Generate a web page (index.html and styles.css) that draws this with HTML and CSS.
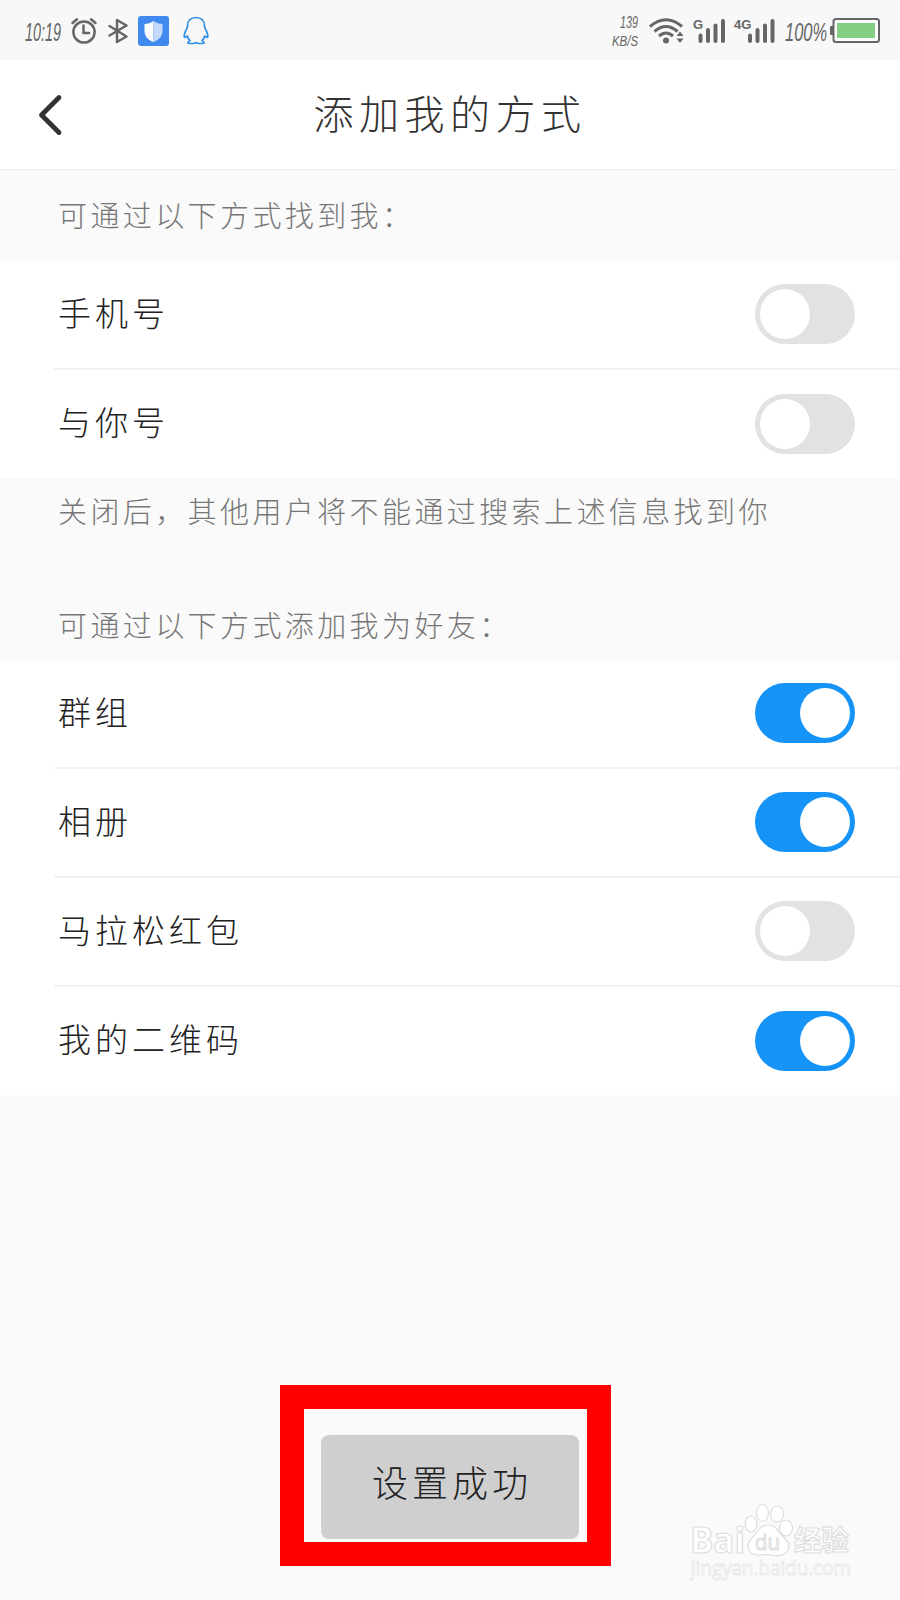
FILE: index.html
```
<!DOCTYPE html>
<html lang="zh-CN">
<head>
    <meta charset="UTF-8">
    <meta name="viewport" content="width=device-width, initial-scale=1.0">
    <title>添加我的方式</title>
    <link rel="stylesheet" href="styles.css">
</head>
<body>

    <div class="status-bar">
        <div class="status-left">
            <svg class="time" width="38" height="34" viewBox="0 0 38 34">
                <text x="0" y="27" font-size="26" textLength="36" lengthAdjust="spacingAndGlyphs">10:19</text>
            </svg>
            <svg class="alarm" width="26" height="28" viewBox="0 0 26 28" fill="none" stroke="#666" stroke-width="2.5" stroke-linecap="round">
                <circle cx="13" cy="15" r="10.6"/>
                <path d="M12.5 8.5V16H18M1.5 6L6 2.2M24.5 6L20 2.2"/>
            </svg>
            <svg class="bluetooth" width="20" height="26" viewBox="0 0 20 26" fill="none" stroke="#666" stroke-width="2.5" stroke-linejoin="round" stroke-linecap="round">
                <path d="M1.5 8L18.5 18.5L9 24V2L18.5 7.5L1.5 17.5"/>
            </svg>
            <svg class="shield" width="31" height="30" viewBox="0 0 31 30">
                <rect width="31" height="30" rx="3" fill="#4089ee"/>
                <path d="M15.5 5C12.5 7 9.5 8 6.5 8V15C6.5 20 10 24 15.5 26Z" fill="#fafcff"/>
                <path d="M15.5 5C18.5 7 21.5 8 24.5 8V15C24.5 20 21 24 15.5 26Z" fill="#c3d9f9"/>
            </svg>
            <svg class="penguin" width="26" height="29" viewBox="0 0 26 29" fill="none" stroke="#2c8fe6" stroke-width="1.7" stroke-linejoin="round">
                <path d="M13 1.5C7.500 1.5 4.500 5 4.500 10C4.500 13 1.500 15.500 1.200 19.500C1 22 2.500 21.500 4.300 20C4.600 22 5.500 23.500 7 24.700C4.500 25.500 4 27.500 6.500 27.500H11L13 26.500L15 27.500H19.500C22 27.500 21.500 25.500 19 24.700C20.500 23.500 21.400 22 21.700 20C23.500 21.500 25 22 24.800 19.500C24.500 15.500 21.500 13 21.500 10C21.500 5 18.500 1.500 13 1.500Z"/>
            </svg>
        </div>

        <div class="status-right">
            <svg class="speed" width="28" height="44" viewBox="0 0 28 44">
                <text x="8" y="18.5" font-size="17" textLength="18" lengthAdjust="spacingAndGlyphs">139</text>
                <text x="0" y="37" font-size="15" textLength="26" lengthAdjust="spacingAndGlyphs">KB/S</text>
            </svg>
            <svg class="wifi" width="35" height="26" viewBox="0 0 35 26" fill="none" stroke="#666" stroke-width="3">
                <path d="M1 8.5Q17 -5 33 8.5M5.5 13.5Q17 3.5 28.5 13.5M10 18Q17 12 24 18"/>
                <circle cx="17" cy="22.5" r="3" fill="#666" stroke="none"/>
                <path d="M31 13.5L34.5 18H27.5ZM31 25L34.5 20.500H27.5Z" fill="#666" stroke="none"/>
            </svg>
            <svg class="signal" width="32" height="26" viewBox="0 0 32 26">
                <text class="net" x="0" y="11" font-size="13">G</text>
                <path d="M7.5 17.5V23M15 12V23M22.5 7.5V23M30 3V23" stroke="#666" stroke-width="4" stroke-linecap="round"/>
            </svg>
            <svg class="signal-4g" width="41" height="26" viewBox="0 0 41 26">
                <text class="net" x="0" y="11" font-size="13">4G</text>
                <path d="M16 17.5V23M23.5 12V23M31 7.5V23M38.5 3V23" stroke="#666" stroke-width="4" stroke-linecap="round"/>
            </svg>
            <svg class="percent" width="43" height="34" viewBox="0 0 43 34">
                <text x="0" y="27" font-size="26" textLength="42" lengthAdjust="spacingAndGlyphs">100%</text>
            </svg>
            <svg class="battery" width="50" height="25" viewBox="0 0 50 25">
                <rect x="0" y="8" width="4" height="9" rx="1" fill="#666"/>
                <rect x="3.5" y="1" width="45.5" height="23" rx="2.5" fill="#fff" stroke="#666" stroke-width="2"/>
                <rect x="7" y="5" width="38" height="15" fill="#85cf85"/>
            </svg>
        </div>
    </div>

    <div class="header">
        <svg class="back" width="24" height="42" viewBox="0 0 24 42" fill="none" stroke="#333" stroke-width="4.8" stroke-linecap="round" stroke-linejoin="round">
            <path d="M21 3.5L3.5 21L21 38.5"/>
        </svg>
        <h1>添加我的方式</h1>
    </div>

    <p class="hint hint-first">可通过以下方式找到我：</p>

    <div class="list">
        <div class="row"><span>手机号</span><div class="switch"></div></div>
        <div class="row"><span>与你号</span><div class="switch"></div></div>
    </div>

    <div class="notes">
        <p class="hint">关闭后，其他用户将不能通过搜索上述信息找到你</p>
        <p class="hint">可通过以下方式添加我为好友：</p>
    </div>

    <div class="list">
        <div class="row"><span>群组</span><div class="switch on"></div></div>
        <div class="row"><span>相册</span><div class="switch on"></div></div>
        <div class="row"><span>马拉松红包</span><div class="switch"></div></div>
        <div class="row"><span>我的二维码</span><div class="switch on"></div></div>
    </div>

    <div class="highlight">
        <div class="toast">设置成功</div>
    </div>

    <!-- Watermark -->
    <svg class="watermark" width="180" height="90" viewBox="0 0 180 90">
        <g fill="#fff" stroke="#dedede" stroke-width="1.2">
            <text class="wm-latin" x="10" y="50" font-size="36" textLength="55" lengthAdjust="spacingAndGlyphs">Bai</text>
            <ellipse cx="71" cy="21" rx="6" ry="8"/>
            <ellipse cx="82.5" cy="10" rx="6" ry="8.5"/>
            <ellipse cx="97" cy="11" rx="6.5" ry="8"/>
            <ellipse cx="106" cy="25" rx="6.5" ry="8"/>
            <path d="M88 22C79 22 77 31 71 36C65 43 69 52 78 52C83 52 86 51 90 52C98 54 109 52 109 43C109 37 102 34 99 29C96 24 93 22 88 22Z"/>
            <text class="wm-du" x="75" y="47" font-size="22" textLength="25" lengthAdjust="spacingAndGlyphs">du</text>
            <text class="wm-cjk" x="114" y="48" font-size="28" textLength="55" lengthAdjust="spacingAndGlyphs">经验</text>
            <text class="wm-url" x="11" y="72" font-size="20" stroke="#e6e6e6" stroke-width="0.8" textLength="160" lengthAdjust="spacingAndGlyphs">jingyan.baidu.com</text>
        </g>
    </svg>

</body>
</html>
```
FILE: styles.css
```
body {
    margin: 0;
    position: relative;
    width: 900px;
    height: 1600px;
    overflow: hidden;
    background-color: #fafafa;
    font-family: "Noto Sans CJK SC", sans-serif;
    font-weight: 300;
    color: #333;
}

h1, p {
    margin: 0;
    font-weight: 300;
}

svg {
    display: block;
    flex: none;
    overflow: visible;
}

.status-bar {
    display: flex;
    justify-content: space-between;
    align-items: center;
    height: 60px;
    padding: 1px 20px 0 25px;
    box-sizing: border-box;
    background-color: #f8f8f8;
}

.status-left, .status-right {
    display: flex;
    align-items: center;
}

.status-bar text {
    font-family: "Liberation Sans Narrow", "Liberation Sans", sans-serif;
    font-style: italic;
    fill: #666;
}

.status-bar .net {
    font-family: "Liberation Sans", sans-serif;
    font-style: normal;
    font-weight: bold;
}

.alarm {
    margin-left: 8px;
}

.bluetooth {
    margin-left: 11px;
}

.shield {
    margin-left: 10px;
}

.penguin {
    margin-left: 14px;
}

.wifi {
    margin-left: 9px;
}

.signal, .signal-4g {
    margin-left: 9px;
}

.percent {
    margin-left: 10px;
}

.battery {
    margin-left: 2px;
}

.header {
    display: grid;
    grid-template-columns: 100px 1fr 100px;
    align-items: center;
    height: 110px;
    border-bottom: 1px solid #eee;
    box-sizing: border-box;
    background-color: white;
}

.back {
    margin-left: 38px;
}

.header h1 {
    padding-bottom: 6px;
    font-size: 40px;
    letter-spacing: 5.5px;
    line-height: 60px;
    text-align: center;
}

.hint {
    padding-left: 58px;
    font-size: 29px;
    line-height: 40px;
    letter-spacing: 3.4px;
    color: #777;
}

.hint-first {
    padding-top: 24px;
    padding-bottom: 27px;
}

.list {
    background-color: white;
}

.row {
    display: flex;
    justify-content: space-between;
    align-items: center;
    height: 109px;
    margin-left: 54px;
    padding: 0 45px 1px 4px;
    box-sizing: border-box;
    border-bottom: 2px solid #f2f2f2;
    font-size: 33px;
    letter-spacing: 4px;
    color: #222;
}

.row span {
    padding-bottom: 5px;
}

.row:last-child {
    height: 108px;
    border-bottom: none;
}

.switch {
    display: flex;
    width: 100px;
    height: 60px;
    padding: 5px;
    box-sizing: border-box;
    border-radius: 30px;
    background-color: #e2e2e2;
}

.switch::before {
    content: "";
    width: 50px;
    height: 50px;
    border-radius: 50%;
    background-color: white;
}

.switch.on {
    justify-content: flex-end;
    background-color: #1593f7;
}

.notes {
    display: flex;
    flex-direction: column;
    gap: 74px;
    height: 182px;
    padding-top: 12px;
    box-sizing: border-box;
}

.highlight {
    width: 331px;
    height: 181px;
    margin: 290px 0 0 280px;
    padding: 26px 8px 2px 17px;
    box-sizing: border-box;
    border: 24px solid #ff0000;
}

.toast {
    height: 104px;
    border-radius: 8px;
    background-color: #cfcfcf;
    font-size: 36px;
    line-height: 92px;
    letter-spacing: 4px;
    text-align: center;
    text-indent: 4px;
    color: #222;
}

/* sits over the page, bottom right */
.watermark {
    position: absolute;
    left: 680px;
    top: 1503px;
}

.wm-latin {
    font-family: "Open Sans", sans-serif;
    font-weight: bold;
}

.wm-du {
    font-family: "Open Sans", sans-serif;
    font-weight: 400;
}

.wm-cjk {
    font-family: "Noto Sans CJK SC", sans-serif;
    font-weight: bold;
}

.wm-url {
    font-family: "Open Sans", sans-serif;
    font-weight: 400;
}
```
